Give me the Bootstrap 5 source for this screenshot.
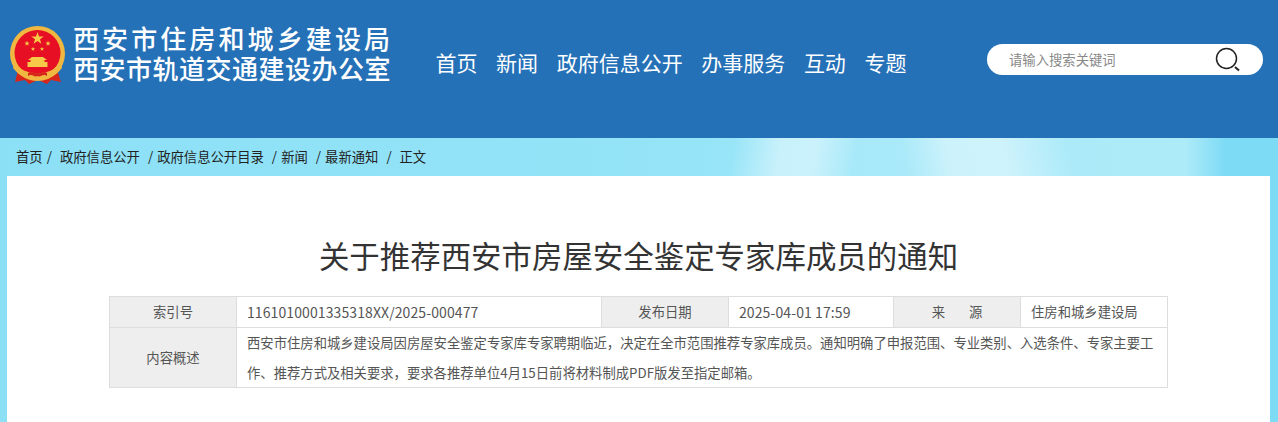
<!DOCTYPE html>
<html lang="zh-CN">
<head>
  <meta charset="UTF-8" />
  <meta name="viewport" content="width=device-width, initial-scale=1.0" />
  <title>关于推荐西安市房屋安全鉴定专家库成员的通知</title>
  <link href="https://cdn.jsdelivr.net/npm/bootstrap@5.3.0/dist/css/bootstrap.min.css" rel="stylesheet" />
  <style>
    html, body { height: 100%; }
    body {
      margin: 0;
      overflow: hidden;
      font-family: "Noto Sans CJK SC", "Liberation Sans", sans-serif;
      color: #333;
      background-color: #8de0f6;
    }
    .page-top {
      height: 138px;
      background-color: #2571b7;
      padding: 26px 15px 0 10px;
    }
    .emblem { width: 56px; height: 58px; flex: none; }
    .site-name {
      margin-left: 7px;
      margin-top: -1px;
      color: #fff;
      font-family: "Liberation Sans", "Noto Sans CJK SC", sans-serif;
      font-weight: 500;
      line-height: 30px;
      width: 320px;
      flex: none;
    }
    .site-name div { white-space: nowrap; }
    .name-a { font-size: 26px; letter-spacing: 3.1px; }
    .name-b { font-size: 26px; letter-spacing: .5px; }
    .main-nav { margin-left: 42.5px; margin-top: 6px; gap: 18.6px; }
    .main-nav a {
      color: #fff;
      font-size: 21px;
      line-height: 60px;
      text-decoration: none;
      white-space: nowrap;
    }
    .search-box {
      width: 276px;
      height: 31px;
      margin-top: 18px;
      padding: 0 22px;
      border-radius: 16px;
      background: #fff;
    }
    .search-box input {
      border: 0;
      outline: 0;
      padding: 0;
      width: 190px;
      background: transparent;
      font-size: 13.33px;
      color: #555;
    }
    .search-box input::placeholder { color: #888; opacity: 1; }
    .search-box svg { width: 26px; height: 26px; flex: none; }
    .sky {
      height: 284px;
      background:
        linear-gradient(100deg, transparent 725px, rgba(255,255,255,.42) 770px, rgba(255,255,255,.42) 805px, transparent 845px),
        linear-gradient(80deg, transparent 935px, rgba(255,255,255,.4) 980px, rgba(255,255,255,.42) 1035px, transparent 1100px),
        linear-gradient(90deg, #8ce0f6 0, #95e4f8 700px, #a8e9f9 840px, #aeebf9 1185px, #7edbf5 1225px);
    }
    .crumbs {
      height: 38px;
      padding-left: 16px;
      font-size: 13.33px;
      line-height: 38px;
      color: #222;
    }
    .crumbs a { color: #222; text-decoration: none; white-space: nowrap; }
    .crumb-sep { width: 17.3px; padding-left: 8px; flex: none; }
    .crumb-sep.first { padding-left: 4px; }
    .crumb-sep.last { width: 21px; }
    .sheet {
      height: 246px;
      margin: 0 8px 0 7px;
      padding-top: 60px;
      background: #fff;
    }
    .doc-title {
      margin: 0 0 21px;
      font-size: 30.45px;
      font-weight: 400;
      line-height: 39px;
      text-align: center;
      color: #333;
    }
    .doc-info {
      width: 1058px;
      margin: 0 auto;
      table-layout: fixed;
      font-size: 13.33px;
      color: #555;
      --bs-table-color: #555;
      --bs-table-border-color: #ddd;
    }
    .doc-info th, .doc-info td {
      padding: 0 10px;
      line-height: 30px;
      font-weight: 400;
      vertical-align: middle;
    }
    .doc-info th { background: #eee; text-align: center; }
    .doc-info td { color: #555; }
    .doc-info .doc-summary { line-height: 29.5px; }
    .doc-info .doc-num { font-size: 14px; letter-spacing: .1px; }
  </style>
</head>
<body>
  <header class="page-top d-flex align-items-start">
    <svg class="emblem" viewBox="0 0 56 58">
      <defs>
        <path id="star5" d="M0 -1 L.235 -.324 L.951 -.309 L.38 .124 L.588 .809 L0 .4 L-.588 .809 L-.38 .124 L-.951 -.309 L-.235 -.324 Z" />
      </defs>
      <path d="M8 44 L5 56 L15 54 L19 58 L28 54 L37 58 L41 54 L51 56 L47 44 Z" fill="#d8261c" />
      <circle cx="27.500" cy="27.500" r="27.500" fill="#f0b840" />
      <circle cx="27.500" cy="27" r="23" fill="#e60f24" />
      <g fill="#f7c948">
        <use href="#star5" transform="translate(27.500 12.500) scale(6.500)" />
        <use href="#star5" transform="translate(17 17.500) scale(2.800)" />
        <use href="#star5" transform="translate(38 17.500) scale(2.800)" />
        <use href="#star5" transform="translate(23 23) scale(2.300)" />
        <use href="#star5" transform="translate(32 23) scale(2.300)" />
        <path d="M22 31 L33 31 L37 34 L34.500 34 L34.500 36 L37.500 36 L37.500 41 L17.500 41 L17.500 36 L20.500 36 L20.500 34 L18 34 Z" />
      </g>
      <path d="M5 35 C10 45 18 47 27.500 47 C37 47 45 45 50 35 L52 42 C45 51 36 54 27.500 54 C19 54 10 51 3 42 Z" fill="#f0b840" />
      <path d="M18 47 C22 44 25 49 27.500 46.500 C30 49 33 44 37 47 L37 50 C33 47 30 52 27.500 50 C25 52 22 47 18 50 Z" fill="#d8261c" />
    </svg>
    <div class="site-name">
      <div class="name-a">西安市住房和城乡建设局</div>
      <div class="name-b">西安市轨道交通建设办公室</div>
    </div>
    <nav class="main-nav d-flex">
      <a href="#">首页</a>
      <a href="#">新闻</a>
      <a href="#">政府信息公开</a>
      <a href="#">办事服务</a>
      <a href="#">互动</a>
      <a href="#">专题</a>
    </nav>
    <form class="search-box ms-auto d-flex align-items-center justify-content-between">
      <input type="text" placeholder="请输入搜索关键词" />
      <svg viewBox="0 0 26 26" fill="none" stroke="#222">
        <circle cx="11.500" cy="11.500" r="10" stroke-width="1.500" />
        <path d="M20 20 L24 23.500" stroke-width="2" />
      </svg>
    </form>
  </header>

  <div class="sky">
    <div class="crumbs d-flex">
      <a href="#">首页</a><span class="crumb-sep first">/</span><a href="#">政府信息公开</a><span class="crumb-sep">/</span><a href="#">政府信息公开目录</a><span class="crumb-sep">/</span><a href="#">新闻</a><span class="crumb-sep">/</span><a href="#">最新通知</a><span class="crumb-sep last">/</span><a href="#">正文</a>
    </div>
    <main class="sheet">
      <h1 class="doc-title">关于推荐西安市房屋安全鉴定专家库成员的通知</h1>
      <table class="table table-bordered doc-info">
        <colgroup>
          <col style="width:127px" />
          <col style="width:365px" />
          <col style="width:127px" />
          <col style="width:165px" />
          <col style="width:127px" />
          <col style="width:147px" />
        </colgroup>
        <tbody>
          <tr>
            <th>索引号</th>
            <td class="doc-num">1161010001335318XX/2025-000477</td>
            <th>发布日期</th>
            <td class="doc-num">2025-04-01 17:59</td>
            <th>来&nbsp;&nbsp;&nbsp;&nbsp;&nbsp;&nbsp;&nbsp;&nbsp;源</th>
            <td>住房和城乡建设局</td>
          </tr>
          <tr>
            <th>内容概述</th>
            <td colspan="5" class="doc-summary">西安市住房和城乡建设局因房屋安全鉴定专家库专家聘期临近，决定在全市范围推荐专家库成员。通知明确了申报范围、专业类别、入选条件、专家主要工作、推荐方式及相关要求，要求各推荐单位4月15日前将材料制成PDF版发至指定邮箱。</td>
          </tr>
        </tbody>
      </table>
    </main>
  </div>

  <script src="https://cdn.jsdelivr.net/npm/bootstrap@5.3.0/dist/js/bootstrap.bundle.min.js"></script>
</body>
</html>
